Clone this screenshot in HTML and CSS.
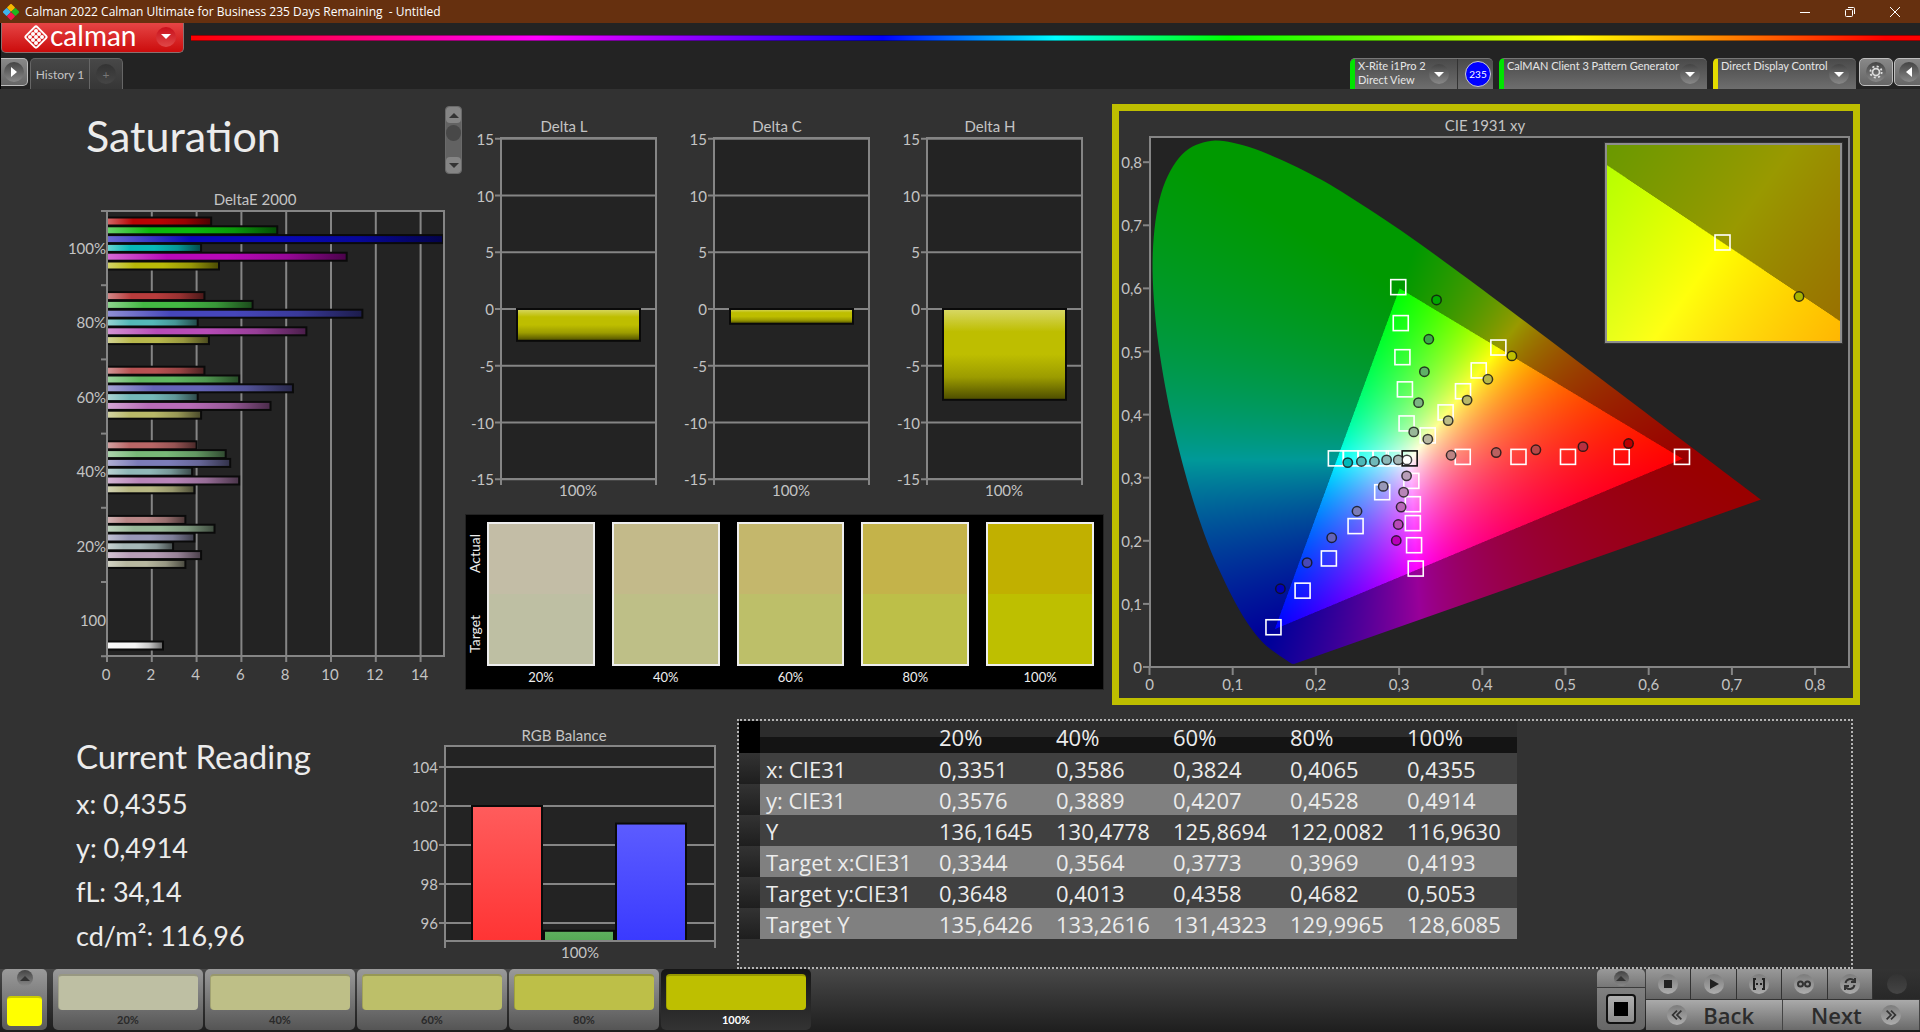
FILE: index.html
```html
<!DOCTYPE html>
<html lang="en">
<head>
<meta charset="utf-8">
<title>Calman 2022 Calman Ultimate for Business</title>
<link rel="stylesheet" href="styles.css">
</head>
<body>
<header class="titlebar">
  <svg class="app-icon" viewBox="0 0 16 16" width="16" height="16" aria-hidden="true">
    <rect x="5" y="0.7" width="6" height="6" rx="1" transform="rotate(45 8 3.7)" fill="#f5b800"/>
    <rect x="0.700" y="5" width="6" height="6" rx="1" transform="rotate(45 3.7 8)" fill="#3fb4ea"/>
    <rect x="9.300" y="5" width="6" height="6" rx="1" transform="rotate(45 12.300 8)" fill="#1fb61f"/>
    <rect x="5" y="9.300" width="6" height="6" rx="1" transform="rotate(45 8 12.300)" fill="#f0184e"/>
  </svg>
  <span class="title">Calman 2022 Calman Ultimate for Business 235 Days Remaining&nbsp; - Untitled</span>
  <button class="win" aria-label="Minimize"><svg viewBox="0 0 12 12" width="12" height="12"><path d="M1 6.5h10" /></svg></button>
  <button class="win" aria-label="Restore"><svg viewBox="0 0 12 12" width="12" height="12"><rect x="1.500" y="3.500" width="7" height="7" rx="1"/><path d="M4 1.500h5.500a1 1 0 0 1 1 1V8"/></svg></button>
  <button class="win" aria-label="Close"><svg viewBox="0 0 12 12" width="12" height="12"><path d="M1 1l10 10M11 1L1 11"/></svg></button>
</header>

<div class="topbar">
  <div class="brand-row">
    <button class="brand" aria-label="calman menu">
      <svg class="brand-mark" viewBox="0 0 24 24" width="24" height="24" aria-hidden="true">
        <rect x="4" y="4" width="16" height="16" rx="2" transform="rotate(45 12 12)" fill="none" stroke="#fff" stroke-width="2"/>
        <g fill="#fff"><circle cx="12" cy="6" r="2"/><circle cx="9" cy="9" r="2"/><circle cx="15" cy="9" r="2"/><circle cx="6" cy="12" r="2"/><circle cx="12" cy="12" r="2"/><circle cx="18" cy="12" r="2"/><circle cx="9" cy="15" r="2"/><circle cx="15" cy="15" r="2"/><circle cx="12" cy="18" r="2"/></g>
      </svg>
      <span class="brand-name">calman</span>
      <span class="knob red"><i class="tri down"></i></span>
    </button>
    <div class="spectrum"></div>
  </div>
  <div class="tab-row">
    <button class="side-btn" aria-label="Expand"><span class="knob"><i class="tri right"></i></span></button>
    <div class="tabs">
      <button class="tab">History 1</button>
      <button class="tab add" aria-label="Add tab"><span class="knob dark">+</span></button>
    </div>
    <div class="spacer"></div>
    <div class="device meter">
      <button class="device-main green"><span>X-Rite i1Pro 2<br>Direct View</span><span class="knob"><i class="tri down"></i></span></button>
      <span class="badge">235</span>
    </div>
    <button class="device device-main green generator"><span>CalMAN Client 3 Pattern Generator</span><span class="knob"><i class="tri down"></i></span></button>
    <button class="device device-main yellow display"><span>Direct Display Control</span><span class="knob"><i class="tri down"></i></span></button>
    <div class="end-btns">
      <button class="side-btn" aria-label="Settings"><span class="knob">
        <svg viewBox="0 0 16 16" width="14" height="14"><circle cx="8" cy="8" r="4" fill="none" stroke="#ddd" stroke-width="2"/><circle cx="8" cy="8" r="6.500" fill="none" stroke="#ddd" stroke-width="2" stroke-dasharray="2.400 2.700"/></svg></span></button>
      <button class="side-btn" aria-label="Collapse"><span class="knob"><i class="tri left"></i></span></button>
    </div>
  </div>
</div>

<main>
  <section class="charts">
    <div class="col-left">
      <div class="heading">
        <h1>Saturation</h1>
        <div class="scroller">
          <button aria-label="Scroll up"><i class="tri up"></i></button>
          <span class="thumb"></span>
          <button aria-label="Scroll down"><i class="tri down"></i></button>
        </div>
      </div>
      <svg id="delta-e" class="chart" viewBox="0 183 465 522" role="img" aria-label="DeltaE 2000"></svg>
    </div>
    <div class="col-mid">
      <svg id="deltas" class="chart" viewBox="465 105 646 409" role="img" aria-label="Delta L, Delta C and Delta H"></svg>
      <div class="swatches">
        <div class="axis"><span>Target</span><span>Actual</span></div>
        <div class="sw"><div class="pair s20"></div><span>20%</span></div>
        <div class="sw"><div class="pair s40"></div><span>40%</span></div>
        <div class="sw"><div class="pair s60"></div><span>60%</span></div>
        <div class="sw"><div class="pair s80"></div><span>80%</span></div>
        <div class="sw"><div class="pair s100"></div><span>100%</span></div>
      </div>
    </div>
    <div class="col-right">
      <div class="cie">
        <svg id="cie" class="chart" viewBox="1119 111 734 587" role="img" aria-label="CIE 1931 xy"></svg>
      </div>
    </div>
  </section>

  <section class="readings">
    <div class="current">
      <h2>Current Reading</h2>
      <p>x: 0,4355</p>
      <p>y: 0,4914</p>
      <p>fL: 34,14</p>
      <p>cd/m²: 116,96</p>
    </div>
    <svg id="rgb" class="chart" viewBox="330 705 407 264" role="img" aria-label="RGB Balance"></svg>
    <div class="table-panel">
      <table>
        <colgroup><col class="c-grip"><col class="c-name"><col class="c-val"><col class="c-val"><col class="c-val"><col class="c-val"><col class="c-last"></colgroup>
        <thead><tr><th></th><th></th><th>20%</th><th>40%</th><th>60%</th><th>80%</th><th>100%</th></tr></thead>
        <tbody>
          <tr><td></td><th scope="row">x: CIE31</th><td>0,3351</td><td>0,3586</td><td>0,3824</td><td>0,4065</td><td>0,4355</td></tr>
          <tr><td></td><th scope="row">y: CIE31</th><td>0,3576</td><td>0,3889</td><td>0,4207</td><td>0,4528</td><td>0,4914</td></tr>
          <tr><td></td><th scope="row">Y</th><td>136,1645</td><td>130,4778</td><td>125,8694</td><td>122,0082</td><td>116,9630</td></tr>
          <tr><td></td><th scope="row">Target x:CIE31</th><td>0,3344</td><td>0,3564</td><td>0,3773</td><td>0,3969</td><td>0,4193</td></tr>
          <tr><td></td><th scope="row">Target y:CIE31</th><td>0,3648</td><td>0,4013</td><td>0,4358</td><td>0,4682</td><td>0,5053</td></tr>
          <tr><td></td><th scope="row">Target Y</th><td>135,6426</td><td>133,2616</td><td>131,4323</td><td>129,9965</td><td>128,6085</td></tr>
        </tbody>
      </table>
    </div>
  </section>
</main>

<footer>
  <button class="pattern-now" aria-label="Current pattern"><span class="knob"><i class="tri up"></i></span><span class="chip"></span></button>
  <div class="steps">
    <button class="step s20"><span class="chip"></span>20%</button>
    <button class="step s40"><span class="chip"></span>40%</button>
    <button class="step s60"><span class="chip"></span>60%</button>
    <button class="step s80"><span class="chip"></span>80%</button>
    <button class="step s100 active"><span class="chip"></span>100%</button>
  </div>
  <div class="spacer"></div>
  <div class="window-btns">
    <button class="pop" aria-label="Show"><span class="knob"><i class="tri up"></i></span></button>
    <button class="frame" aria-label="Pattern window"><span></span></button>
  </div>
  <div class="transport">
    <div class="keys">
      <button aria-label="Stop"><span class="knob lit"><svg viewBox="0 0 16 16" width="16" height="16"><rect x="4" y="4" width="8" height="8" fill="#222"/></svg></span></button>
      <button aria-label="Play"><span class="knob lit"><svg viewBox="0 0 16 16" width="16" height="16"><path d="M4 3l9 5-9 5z" fill="#222"/></svg></span></button>
      <button aria-label="Read series"><span class="knob lit"><svg viewBox="0 0 16 16" width="16" height="16" fill="none" stroke="#222" stroke-width="2"><path d="M5 3H3v10h2M11 3h2v10h-2"/><path d="M5 8h6" stroke-dasharray="2 2"/></svg></span></button>
      <button aria-label="Continuous"><span class="knob lit"><svg viewBox="0 0 16 16" width="16" height="16" fill="none" stroke="#333" stroke-width="2"><circle cx="4.500" cy="8" r="2.500"/><circle cx="11.500" cy="8" r="2.500"/></svg></span></button>
      <button aria-label="Refresh"><span class="knob lit"><svg viewBox="0 0 16 16" width="16" height="16" fill="none" stroke="#333" stroke-width="2"><path d="M3.500 7a5 5 0 0 1 8.500-2.500M12.500 9A5 5 0 0 1 4 11.500"/><path d="M13 2v4H9M3 14v-4h4" /></svg></span></button>
      <button class="off" aria-label="Status"><span class="knob dark"></span></button>
    </div>
    <div class="nav">
      <button><span class="knob lit"><svg viewBox="0 0 16 16" width="14" height="14" fill="none" stroke="#333" stroke-width="2"><path d="M8 3L3 8l5 5M13 3L8 8l5 5"/></svg></span>Back</button>
      <button>Next<span class="knob lit"><svg viewBox="0 0 16 16" width="14" height="14" fill="none" stroke="#333" stroke-width="2"><path d="M3 3l5 5-5 5M8 3l5 5-5 5"/></svg></span></button>
    </div>
  </div>
</footer>
<script src="charts.js"></script>
</body>
</html>
```
FILE: styles.css
```css
* { box-sizing: border-box; }
body {
  margin: 0;
  min-height: 100vh;
  display: flex;
  flex-direction: column;
  background: #323232;
  color: #ececec;
  font-family: Lato, "Open Sans", sans-serif;
}
button {
  margin: 0;
  padding: 0;
  border: 0;
  background: none;
  color: inherit;
  font: inherit;
}
h1, h2, p { margin: 0; font-weight: 400; }
.spacer { flex: 1; }

/* window title */
.titlebar {
  height: 23px;
  flex: none;
  display: flex;
  align-items: center;
  padding-left: 3px;
  padding-right: 3px;
  background: #66300f;
  color: #fff;
  font: 12px/16px "Open Sans", sans-serif;
}
.title { margin-left: 6px; flex: 1; }
.win { width: 45px; height: 22px; display: grid; place-items: center; }
.win svg { fill: none; stroke: #fff; }

/* brand and tabs */
.topbar {
  height: 66px;
  flex: none;
  display: flex;
  flex-direction: column;
  justify-content: space-between;
  background: #232323;
  border-left: 1px solid #000;
}
.brand-row { display: flex; align-items: center; gap: 7px; height: 30px; }
.brand {
  width: 183px;
  height: 30px;
  display: flex;
  align-items: center;
  padding: 0 7px 2px 22px;
  border: 1px solid #8a7070;
  border-top: 0;
  border-radius: 0 0 5px 5px;
  background: linear-gradient(#e54545, #cc0c0c);
}
.brand-name { flex: 1; margin-left: 2px; padding-bottom: 3px; text-align: left; color: #fff; font: 28px/25px Lato, sans-serif; }
.spectrum {
  flex: 1;
  height: 6px;
  border-top: 1px solid rgba(0, 0, 0, .4);
  border-bottom: 1px solid rgba(0, 0, 0, .4);
  background: linear-gradient(90deg, #f00, #f0f 20%, #00f 40%, #0ff 50%, #0f0 60%, #ff0 80%, #f00 98%);
}
.tab-row { display: flex; height: 31px; align-items: stretch; }
.knob {
  width: 20px;
  height: 20px;
  flex: none;
  border-radius: 50%;
  display: grid;
  place-items: center;
  background: linear-gradient(#444, #888);
}
.knob.red { background: linear-gradient(#c80f1a, #e04848); }
.knob.dark { background: linear-gradient(#333, #454545); color: #777; }
.knob.lit { background: linear-gradient(#7c7c7c, #adadad); }
.tri { width: 0; height: 0; border: 5px solid transparent; }
.tri.down { border-top-color: #fff; border-bottom-width: 0; }
.tri.up { border-bottom-color: #333; border-top-width: 0; }
.tri.right { border-left: 6px solid #fff; border-right-width: 0; }
.tri.left { border-right: 6px solid #fff; border-left-width: 0; }
.side-btn {
  width: 28px;
  height: 28px;
  display: grid;
  place-items: center;
  border: 1px solid #bdbdbd;
  border-radius: 5px;
  background: linear-gradient(#888, #666);
}
.tab-row > .side-btn { width: 27px; border-left: 0; border-radius: 0 5px 5px 0; }
.tabs {
  display: flex;
  margin-left: 2px;
  border: 1px solid #666;
  border-bottom: 0;
  border-radius: 5px 5px 0 0;
  background: linear-gradient(#484848, #363636);
}
.tab { width: 58px; font-size: 12px; color: #c4c4c4; }
.tab.add { width: 33px; display: grid; place-items: center; border-left: 1px solid #666; }
.device {
  display: flex;
  margin-right: 6px;
  border-top: 1px solid #777;
  border-radius: 5px 5px 0 0;
  background: linear-gradient(#4a4a4a, #6e6e6e);
}
.device-main {
  display: flex;
  justify-content: space-between;
  align-items: flex-start;
  padding: 0 6px 0 3px;
  border-left: 5px solid #00e400;
  text-align: left;
  font-size: 11px;
  line-height: 14px;
  white-space: nowrap;
  color: #e6e6e6;
}
.device-main .knob { margin-top: 5px; }
.device-main.yellow { border-left-color: #e4dc00; }
.generator, .display { padding-right: 7px; }
.meter { width: 143px; align-items: center; }
.meter .device-main { flex: 1; height: 30px; padding-right: 8px; border-radius: 5px 0 0 0; border-right: 1px solid #333; }
.badge {
  width: 26px;
  height: 26px;
  margin: 0 2px 0 7px;
  border: 1px solid #ccc;
  border-radius: 50%;
  background: #00f;
  color: #fff;
  text-align: center;
  font-size: 10px;
  line-height: 24px;
}
.generator { width: 208px; }
.display { width: 143px; margin-right: 3px; }
.end-btns { display: flex; width: 61px; overflow: hidden; gap: 1px; }
.end-btns .side-btn { width: 34px; flex: none; }
.end-btns .side-btn:last-child { padding-right: 4px; }

/* charts */
.chart { display: block; width: 100%; height: auto; }
.chart text { fill: #c4c4c4; font-size: 15px; }
.charts { display: grid; grid-template-columns: 465fr 646fr 809fr; }
.col-left, .col-mid, .col-right { min-width: 0; }
.heading { height: 94px; display: flex; justify-content: space-between; align-items: flex-start; padding: 17px 3px 0 86px; }
h1 { font-size: 43px; line-height: 60px; }
.scroller {
  width: 17px;
  height: 68px;
  display: flex;
  flex-direction: column;
  border-radius: 4px;
  border: 1px solid #6a6a6a;
  background: #626262;
}
.scroller button { height: 16px; display: grid; place-items: center; border-radius: 4px; background: #858585; }
.scroller .thumb { height: 16px; margin: 2px 0 auto; border-radius: 8px; background: #484848; }
.scroller .tri.down { border-top-color: #333; }
.col-mid { padding-top: 16px; }
.swatches {
  margin-right: 7px;
  height: 176px;
  padding: 7px 9px 0 1px;
  display: grid;
  grid-template-columns: 20px 108fr 125fr 125fr 125fr 125fr;
  background: #000;
  border: 1px solid #222;
  color: #eee;
  font-size: 13px;
}
.axis {
  writing-mode: vertical-rl;
  transform: rotate(180deg);
  height: 143px;
  padding: 12px 0;
  display: flex;
  justify-content: space-between;
  font-size: 14px;
  line-height: 16px;
}
.sw { text-align: center; padding-left: 17px; line-height: 22px; }
.axis + .sw { padding-left: 0; }
.pair { height: 144px; border: 2px solid #eee; background: linear-gradient(var(--actual) 50%, var(--target) 50%); }
.s20 { --actual: #c3bda6; --target: #bebfa3; }
.s40 { --actual: #c3ba8a; --target: #bebf87; }
.s60 { --actual: #c4b76c; --target: #bdbf69; }
.s80 { --actual: #c4b34a; --target: #bdbf48; }
.s100 { --actual: #c1b000; --target: #bebf00; }
.col-right { padding: 15px 60px 0 1px; }
.cie { border: 7px solid #bebe00; }
.cie canvas { display: block; width: 100%; height: 100%; }

/* readings */
.readings { display: grid; grid-template-columns: 330fr 407fr 1183fr; }
.current { padding: 29px 0 0 76px; white-space: nowrap; }
.current h2 { font-size: 33px; line-height: 44px; margin-bottom: 4px; }
.current p { font-size: 27px; line-height: 44px; }
.table-panel { margin: 14px 67px 0 0; border: 2px dotted #b4b4b4; }
table { border-collapse: collapse; table-layout: fixed; width: 70%; font: 22px/28px "Open Sans", sans-serif; }
.c-grip { width: 21px; }
.c-name { width: 173px; }
.c-val { width: 117px; }
th, td { height: 31px; padding: 0 0 0 6px; text-align: left; font-weight: 400; white-space: nowrap; }
thead th { height: 32px; background: linear-gradient(#2c2c2c 50%, #141414 50%); }
thead th:first-child { background: #000; }
tbody tr { background: #404040; }
tbody tr:nth-child(even) { background: #808080; }
tbody td:first-child { background: linear-gradient(#333, #1e1e1e); }

/* footer */
footer {
  margin-top: auto;
  height: 63px;
  flex: none;
  display: flex;
  align-items: flex-start;
  padding: 0 0 0 2px;
  background: linear-gradient(#484848, #1e1e1e);
}
.pattern-now {
  width: 45px;
  height: 61px;
  display: flex;
  flex-direction: column;
  align-items: center;
  justify-content: space-between;
  padding: 1px 0 4px;
  border-radius: 5px;
  background: linear-gradient(#9a9a9a, #5a5a5a);
}
.pattern-now .knob { width: 16px; height: 16px; }
.pattern-now .chip { width: 35px; height: 30px; border-radius: 4px; background: #ff0; border-top: 2px solid #cc0; }
.steps { display: flex; gap: 2px; margin-left: 6px; }
.step {
  width: 150px;
  height: 61px;
  padding: 5px 5px 0;
  border-radius: 5px;
  background: linear-gradient(#9a9a9a, #555);
  color: #2a2a2a;
  font-size: 11px;
  line-height: 20px;
  font-weight: 700;
}
.step .chip { display: block; height: 36px; border-radius: 4px; background: var(--target); border-top: 2px solid rgba(0, 0, 0, .2); border-left: 1px solid rgba(0, 0, 0, .15); }
.step.active { background: linear-gradient(#161616, #333); color: #fff; }
.window-btns { width: 48px; height: 61px; border-radius: 5px; overflow: hidden; display: flex; flex-direction: column; gap: 1px; }
.window-btns button { background: linear-gradient(#999, #777); display: grid; place-items: center; }
.pop { height: 18px; }
.pop .knob { width: 15px; height: 15px; }
.window-btns .frame { flex: 1; background: linear-gradient(#808080, #666); }
.frame span { width: 30px; height: 30px; border: 2px solid #111; border-radius: 4px; background: linear-gradient(#000, #000) center / 14px 14px no-repeat, linear-gradient(#b0b0b0, #8c8c8c); }
.transport { width: 274px; margin-left: 1px; display: flex; flex-direction: column; gap: 1px; }
.keys { display: grid; grid-template-columns: repeat(5, 1fr) 47px; }
.keys button { height: 30px; display: grid; place-items: center; border-right: 1px solid #333; background: linear-gradient(#999, #666); }
.keys .off { border: 0; background: linear-gradient(#333, #282828); }
.nav { display: grid; grid-template-columns: 1fr 1fr; }
.nav button {
  height: 30px;
  display: flex;
  align-items: center;
  justify-content: space-between;
  padding: 0 28px 0 21px;
  border-right: 1px solid #444;
  background: linear-gradient(#aaa, #6a6a6a);
  color: #2c2c2c;
  font: 600 22px/28px "Open Sans", sans-serif;
}
.nav button:last-child { padding: 0 18px 0 28px; }
```
FILE: charts.js
```js
const NS = 'http://www.w3.org/2000/svg';
function add(parent, name, attrs, text) {
  const e = document.createElementNS(NS, name);
  for (const k in attrs) e.setAttribute(k, attrs[k]);
  if (text !== undefined) e.textContent = text;
  parent.appendChild(e);
  return e;
}
function label(svg, x, y, text, anchor) {
  add(svg, 'text', { x, y, 'text-anchor': anchor || 'middle' }, text);
}
function rule(svg, x1, y1, x2, y2, width) {
  add(svg, 'line', { x1, y1, x2, y2, stroke: '#858585', 'stroke-width': width || 2 });
}
function plot(svg, x, y, w, h) {
  add(svg, 'rect', { x, y, width: w, height: h, fill: '#232323', stroke: '#858585', 'stroke-width': 2 });
}
function mix(hex, target, t) {
  const n = parseInt(hex.slice(1), 16);
  const c = [n >> 16, (n >> 8) & 255, n & 255].map(v => Math.round(v + (target - v) * t));
  return 'rgb(' + c.join(',') + ')';
}
let gradients = 0;
function shade(svg, stops, vertical) {
  const id = 'shade' + (++gradients);
  const g = add(svg, 'linearGradient', { id, x1: 0, y1: 0, x2: vertical ? 0 : 1, y2: vertical ? 1 : 0 });
  stops.forEach(s => add(g, 'stop', { offset: s[0], 'stop-color': s[1] }));
  return 'url(#' + id + ')';
}
function glossy(svg, color, vertical) {
  return shade(svg, [[0, mix(color, 255, 0.4)], [0.25, color], [0.5, color], [0.75, mix(color, 0, 0.18)], [1, mix(color, 0, 0.6)]], vertical);
}

/* DeltaE 2000: error per saturation level and colour */
(function () {
  const svg = document.getElementById('delta-e');
  const X = v => 107 + v * 22.4;
  plot(svg, 107, 211, 337, 445);
  label(svg, 255, 205, 'DeltaE 2000');
  for (let v = 0; v <= 14; v += 2) {
    rule(svg, X(v), 211, X(v), 662);
    label(svg, X(v) - 1, 680, v);
  }
  for (let i = 0; i <= 6; i++) rule(svg, 101, 211 + i * 74.2, 107, 211 + i * 74.2);
  const rows = [
    ['100%', [4.65, 7.6, 15, 4.2, 10.7, 5], ['#b80404', '#0cb80c', '#0808b8', '#08b8b8', '#b808b8', '#b8b808']],
    ['80%', [4.35, 6.5, 11.4, 4.05, 8.9, 4.55], ['#b83c3c', '#44b844', '#4646bb', '#54b8b8', '#b84cb8', '#b8b84c']],
    ['60%', [4.35, 5.9, 8.3, 4.05, 7.3, 4.2], ['#b85252', '#60b860', '#6464b8', '#74b8b8', '#b86cb8', '#b8b868']],
    ['40%', [4, 5.3, 5.5, 3.8, 5.9, 3.9], ['#b86666', '#78b878', '#7c7cb8', '#90b8b8', '#b885b8', '#b8b884']],
    ['20%', [3.5, 4.8, 3.9, 2.95, 4.2, 3.5], ['#b88686', '#98b898', '#9898b8', '#a6b8b8', '#b89eb8', '#b8b8a0']],
    ['100', [null, null, null, null, null, 2.5], [, , , , , '#f4f4f4']]
  ];
  rows.forEach((row, r) => {
    row[1].forEach((v, i) => {
      if (v === null) return;
      const y = 217.5 + r * 74.6 + i * 8.8 + (r === 5 ? 7 : 0);
      add(svg, 'rect', { x: 107, y: y, width: v * 22.4, height: 8, fill: glossy(svg, row[2][i]), stroke: '#0a0a0a', 'stroke-width': 2 });
    });
    label(svg, 106, 254 + r * 74.4, row[0], 'end');
  });
  rule(svg, 107, 211, 107, 662);
  rule(svg, 444, 211, 444, 656);
})();

/* lightness, chroma and hue error at full saturation */
(function () {
  const svg = document.getElementById('deltas');
  [['Delta L', -2.8], ['Delta C', -1.3], ['Delta H', -8]].forEach((d, i) => {
    const x = 501 + i * 213;
    plot(svg, x, 138, 155, 341);
    label(svg, x + 63, 132, d[0]);
    label(svg, x + 77, 496, '100%');
    for (let v = -15; v <= 15; v += 5) {
      const y = 309 - v * 11.35;
      rule(svg, x - 6, y, x + 155, y);
      label(svg, x - 7, y + 6, v, 'end');
    }
    rule(svg, x, 479, x, 485);
    rule(svg, x + 155, 479, x + 155, 485);
    add(svg, 'rect', { x: x + 16, y: 309, width: 123, height: -d[1] * 11.35, fill: glossy(svg, '#bebe00', true), stroke: '#0a0a0a', 'stroke-width': 2 });
  });
})();

/* red, green and blue balance */
(function () {
  const svg = document.getElementById('rgb');
  plot(svg, 445, 746, 270, 195);
  label(svg, 564, 741, 'RGB Balance');
  label(svg, 580, 958, '100%');
  const Y = v => 845 - (v - 100) * 19.5;
  for (let v = 96; v <= 104; v += 2) {
    rule(svg, 439, Y(v), 715, Y(v));
    label(svg, 438, Y(v) + 6, v, 'end');
  }
  [[102, '#ff5c5c', '#ff3434'], [95.6, '#5fb05f', '#55a855'], [101.1, '#5c5cff', '#3a3aff']].forEach((b, i) => {
    add(svg, 'rect', { x: 472 + i * 72, y: Y(b[0]), width: 70, height: 941 - Y(b[0]), fill: shade(svg, [[0, b[1]], [1, b[2]]], true), stroke: '#0a0a0a', 'stroke-width': 2 });
  });
  rule(svg, 445, 941, 715, 941);
  rule(svg, 445, 941, 445, 948);
  rule(svg, 715, 941, 715, 948);
})();

/* CIE 1931 chromaticity diagram */
(function () {
  const svg = document.getElementById('cie');
  const X = x => 1149.5 + x * 832;
  const Y = y => 667 - y * 631;
  const locus = [
    [.1741, .0050], [.1714, .0051], [.1689, .0069], [.1644, .0109], [.1566, .0177], [.1440, .0297], [.1355, .0399],
    [.1241, .0578], [.1096, .0868], [.0913, .1327], [.0687, .2007], [.0454, .2950], [.0235, .4127], [.0082, .5384],
    [.0039, .6548], [.0139, .7502], [.0389, .8120], [.0743, .8338], [.1142, .8262], [.1547, .8059], [.1929, .7816],
    [.2296, .7543], [.3016, .6923], [.3731, .6245], [.4441, .5547], [.5125, .4866], [.5752, .4242], [.6270, .3725],
    [.6658, .3340], [.6915, .3083], [.7190, .2809], [.7347, .2653]
  ];
  function side(a, b, x, y) { return (b[0] - a[0]) * (y - a[1]) - (b[1] - a[1]) * (x - a[0]); }
  function inGamut(x, y) {
    const r = [.64, .33], g = [.3, .6], b = [.15, .06];
    return side(r, g, x, y) >= 0 && side(g, b, x, y) >= 0 && side(b, r, x, y) >= 0;
  }
  function paint(canvas, x0, y0, x1, y1) {
    const w = canvas.width, h = canvas.height, ctx = canvas.getContext('2d');
    const img = ctx.createImageData(w, h);
    for (let j = 0; j < h; j++) {
      const y = y1 - (j + .5) / h * (y1 - y0);
      for (let i = 0; i < w; i++) {
        const x = x0 + (i + .5) / w * (x1 - x0);
        const p = x / y, q = (1 - x - y) / y;
        const c = [3.2406 * p - 1.5372 - .4986 * q, -.9689 * p + 1.8758 + .0415 * q, .0557 * p - .2040 + 1.0570 * q].map(v => Math.max(0, v));
        const k = (inGamut(x, y) ? 255 : 153) / Math.max(c[0], c[1], c[2]);
        const o = (j * w + i) * 4;
        img.data[o] = c[0] * k;
        img.data[o + 1] = c[1] * k;
        img.data[o + 2] = c[2] * k;
        img.data[o + 3] = 255;
      }
    }
    ctx.putImageData(img, 0, 0);
    return ctx;
  }
  function surface(x, y, w, h, x0, y0, x1, y1) {
    const fo = add(svg, 'foreignObject', { x, y, width: w, height: h });
    const canvas = document.createElement('canvas');
    canvas.width = w * 2;
    canvas.height = h * 2;
    fo.appendChild(canvas);
    return paint(canvas, x0, y0, x1, y1);
  }
  const box = (cx, cy, color) => add(svg, 'rect', { x: cx - 7.5, y: cy - 7.5, width: 15, height: 15, fill: 'none', stroke: color || '#fff', 'stroke-width': 1.6 });
  const dot = (cx, cy, color) => add(svg, 'circle', { cx, cy, r: 4.7, fill: color, stroke: '#111', 'stroke-opacity': .8, 'stroke-width': 1.5 });

  plot(svg, 1150, 137, 699, 530);
  label(svg, 1485, 131, 'CIE 1931 xy');
  for (let i = 0; i <= 8; i++) {
    const text = i ? '0,' + i : '0';
    rule(svg, X(i / 10), 667, X(i / 10), 675);
    label(svg, X(i / 10), 690, text);
    rule(svg, 1143, Y(i / 10), 1150, Y(i / 10));
    label(svg, 1142, Y(i / 10) + 6, text, 'end');
  }

  const ctx = surface(1151, 138, 697, 528, 1 / 832, 1 / 631, 698 / 832, 529 / 631);
  ctx.globalCompositeOperation = 'destination-in';
  ctx.beginPath();
  const n = locus.length;
  for (let i = 0; i < n - 1; i++) {
    const a = locus[Math.max(0, i - 1)], b = locus[i], c = locus[i + 1], d = locus[Math.min(n - 1, i + 2)];
    for (let t = 0; t <= 1; t += .125) {
      const v = [0, 1].map(k => .5 * (2 * b[k] + (c[k] - a[k]) * t + (2 * a[k] - 5 * b[k] + 4 * c[k] - d[k]) * t * t + (3 * b[k] - a[k] - 3 * c[k] + d[k]) * t * t * t));
      ctx.lineTo((X(v[0]) - 1151) * 2, (Y(v[1]) - 138) * 2);
    }
  }
  ctx.closePath();
  ctx.fill();

  const targets = [
    [.2240, .3306], [.2420, .3306], [.2595, .3306], [.2780, .3306], [.2937, .3306],
    [.299, .602], [.302, .545], [.304, .491], [.307, .440], [.309, .386],
    [.4193, .5063], [.3957, .470], [.3768, .437], [.3559, .4035], [.3344, .367],
    [.640, .333], [.5676, .333], [.503, .333], [.4435, .333], [.3765, .333],
    [.320, .156], [.318, .193], [.3165, .228], [.3165, .258], [.3147, .295],
    [.149, .063], [.184, .121], [.2156, .172], [.2477, .2233], [.2797, .277]
  ];
  targets.forEach(p => box(X(p[0]), Y(p[1])));
  box(X(.3127), Y(.3306), '#111');
  const measured = {
    '#00a800 #3caa48 #5fb066 #7cb482 #98b898': [[.345, .5817], [.3357, .5194], [.3304, .468], [.3234, .4189], [.3176, .3726]],
    '#bebf00 #b8b848 #b8b868 #bcbc84 #b8b8a0': [[.4355, .493], [.4067, .456], [.3817, .423], [.359, .3905], [.3345, .361]],
    '#b80000 #b83040 #b84848 #bb6060 #bb8484': [[.5758, .3541], [.521, .3492], [.4644, .3442], [.4167, .3399], [.3625, .3356]],
    '#00b8b8 #4cb8b8 #70b8b8 #8cb8b8 #a6b8b8': [[.2383, .3239], [.2547, .3257], [.2704, .3257], [.285, .3282], [.299, .3282]],
    '#b800b8 #b848b8 #b868b8 #b885b8 #b89eb8': [[.2966, .2005], [.299, .2258], [.3024, .2535], [.3054, .277], [.309, .3029]],
    '#0000b8 #4848b8 #6464b8 #7c7cb8 #9898b8': [[.1573, .124], [.1894, .1653], [.219, .2048], [.2494, .2468], [.2809, .2862]]
  };
  for (const colors in measured) {
    const fill = colors.split(' ');
    measured[colors].forEach((p, i) => dot(X(p[0]), Y(p[1]), fill[i]));
  }
  dot(X(.3094), Y(.3282), '#fff');

  /* enlarged view around the selected target */
  add(svg, 'rect', { x: 1604, y: 142, width: 239, height: 202, fill: '#323232' });
  surface(1606, 144, 235, 198, .3943, .4803, .4443, .5303);
  add(svg, 'rect', { x: 1606, y: 144, width: 235, height: 198, fill: 'none', stroke: '#8e8e8e', 'stroke-width': 2 });
  box(1722.5, 242.5);
  dot(1799, 296.5, '#a8b400');
})();
```
